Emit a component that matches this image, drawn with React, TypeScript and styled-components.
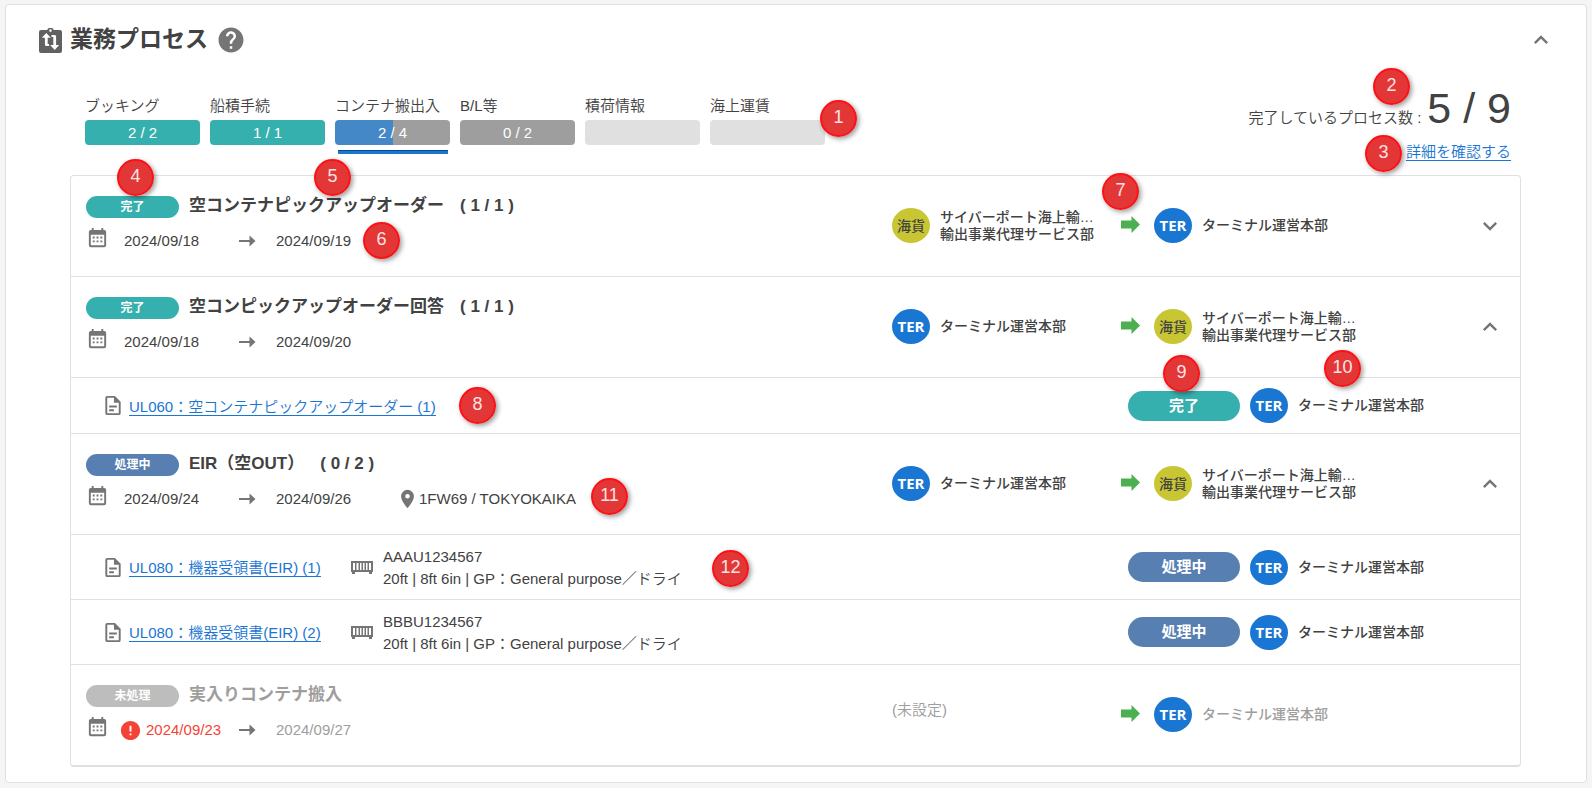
import React from 'react';
import styled, { createGlobalStyle } from 'styled-components';
import { MdError, MdHelp } from 'react-icons/md';

const GlobalStyle = createGlobalStyle`
  *, *::before, *::after { box-sizing: border-box; }
  body {
    margin: 0;
    padding: 4px 5px 5px;
    background: #f5f5f5;
    color: #424242;
    font-family: "Liberation Sans", "Noto Sans CJK JP", sans-serif;
    font-size: 15px;
    font-weight: 350;
    line-height: 22px;
  }
  h1, h2, p, ul, ol { margin: 0; padding: 0; }
  ul, ol { list-style: none; }
  svg { display: block; fill: currentColor; flex: none; }
`;

type Status = 'done' | 'active' | 'pending';
type PartyKind = 'TER' | '海貨';

const statusLabel: Record<Status, string> = { done: '完了', active: '処理中', pending: '未処理' };
const statusColor: Record<Status, string> = { done: '#36b0ae', active: '#587fb1', pending: '#bdbdbd' };

const Card = styled.main`
  padding-bottom: 15px;
  background: #fff;
  border: 1px solid #e0e0e0;
  border-radius: 4px;
`;

const Header = styled.header`
  display: flex;
  align-items: center;
  height: 70px;
  padding: 0 31px 0 33px;
  color: #616161;
`;

const Title = styled.h1`
  margin: 0 9px 2px 8px;
  color: #424242;
  font-size: 23px;
  line-height: 32px;
`;

const IconButton = styled.button`
  display: flex;
  align-items: center;
  justify-content: center;
  width: 28px;
  height: 28px;
  padding: 0;
  border: 0;
  background: none;
  color: #757575;
  cursor: pointer;
`;

const Spacer = styled.div`
  flex: 1;
`;

const Summary = styled.section`
  position: relative;
  display: flex;
  justify-content: space-between;
  height: 100px;
  padding: 0 75px 0 79px;
`;

const Stages = styled.ol`
  display: flex;
  gap: 10px;
  padding-top: 20px;
`;

const Stage = styled.li`
  position: relative;
  width: 115px;
  white-space: nowrap;
`;

const Bar = styled.div<{ $fill: string; $track: string; $percent: number }>`
  height: 25px;
  margin-top: 3px;
  border-radius: 4px;
  background: linear-gradient(to right, ${p => p.$fill} ${p => p.$percent}%, ${p => p.$track} ${p => p.$percent}%);
  color: #fff;
  line-height: 25px;
  text-align: center;
`;

const Underline = styled.div`
  height: 4px;
  margin: 5px 2px 0 3px;
  border-top: 1px solid #0d4a8a;
  background: #1976d2;
`;

const Total = styled.div`
  display: flex;
  flex-direction: column;
  align-items: flex-end;
  padding-top: 10px;
`;

const TotalLine = styled.p`
  display: flex;
  align-items: baseline;
  gap: 6px;
  line-height: 46px;
`;

const TotalCount = styled.strong`
  font-size: 43px;
  font-weight: 400;
`;

const Link = styled.a`
  padding-top: 3px;
  border-bottom: 1px solid #1976d2;
  color: #1976d2;
  line-height: 16px;
  text-decoration: none;
  white-space: nowrap;
`;

const Panel = styled.ul`
  margin: 0 65px 0 64px;
  border: 1px solid #e0e0e0;
  border-bottom-width: 2px;
  border-radius: 4px;
`;

const Row = styled.li<{ $kind: 'process' | 'document' | 'container' }>`
  position: relative;
  display: flex;
  align-items: center;
  height: ${p => ({ process: 101, document: 56, container: 65 })[p.$kind]}px;
  padding: 0 16px 0 ${p => (p.$kind === 'process' ? 15 : 32)}px;
  border-bottom: 1px solid #e0e0e0;

  &:last-child {
    height: 100px;
    border-bottom: 0;
  }
`;

const Main = styled.div`
  flex: 1;
  align-self: flex-start;
  min-width: 0;
  padding-top: 17px;
`;

const Heading = styled.div`
  display: flex;
  align-items: center;
  gap: 10px;
`;

const Name = styled.h2<{ $muted?: boolean }>`
  display: flex;
  gap: 16px;
  color: ${p => (p.$muted ? '#9e9e9e' : '#424242')};
  font-size: 17px;
  line-height: 26px;
`;

const Pill = styled.span<{ $status: Status; $large?: boolean }>`
  flex: none;
  width: ${p => (p.$large ? 112 : 93)}px;
  margin-top: ${p => (p.$large ? 0 : 2)}px;
  border-radius: 15px;
  background: ${p => statusColor[p.$status]};
  color: #fff;
  font-size: ${p => (p.$large ? 15 : 12)}px;
  font-weight: 700;
  line-height: ${p => (p.$large ? 30 : 22)}px;
  text-align: center;
`;

const Dates = styled.div`
  display: flex;
  align-items: center;
  height: 24px;
  margin-top: 10px;
  color: #757575;
  white-space: nowrap;
`;

const CalendarSlot = styled.span`
  padding-bottom: 6px;
`;

const StartDate = styled.span<{ $late?: boolean }>`
  display: flex;
  align-items: center;
  gap: 4px;
  width: ${p => (p.$late ? 120 : 115)}px;
  margin-left: ${p => (p.$late ? 10 : 15)}px;
  color: ${p => (p.$late ? '#f44336' : '#424242')};
`;

const EndDate = styled.span<{ $muted?: boolean }>`
  width: 103px;
  margin-left: 20px;
  color: ${p => (p.$muted ? '#9e9e9e' : '#424242')};
`;

const Place = styled.span`
  display: flex;
  align-items: center;
  margin-left: 17px;
`;

const PlaceName = styled.span`
  color: #424242;
`;

const Flow = styled.div`
  display: flex;
  align-items: center;
  flex: none;
  width: 612px;
  padding-bottom: 1px;
`;

const PartySlot = styled.div<{ $grow?: boolean }>`
  flex: ${p => (p.$grow ? '1' : '0 0 229px')};
`;

const ArrowSlot = styled.div`
  flex: 0 0 33px;
  padding-bottom: 3px;
  color: #4caf50;
`;

const PartyBox = styled.div<{ $muted?: boolean }>`
  display: flex;
  align-items: center;
  gap: 10px;
  color: ${p => (p.$muted ? '#9e9e9e' : '#424242')};
  font-size: 14px;
  font-weight: 500;
  line-height: 17px;
  white-space: nowrap;
`;

const Avatar = styled.span<{ $kind: PartyKind }>`
  flex: none;
  width: 38px;
  height: 35px;
  border-radius: 50%;
  background: ${p => (p.$kind === 'TER' ? '#1976d2' : '#c9c633')};
  color: ${p => (p.$kind === 'TER' ? '#fff' : '#424242')};
  font-family: "Open Sans", "Noto Sans CJK JP", sans-serif;
  font-size: ${p => (p.$kind === 'TER' ? 15 : 14)}px;
  font-weight: ${p => (p.$kind === 'TER' ? 700 : 500)};
  line-height: 35px;
  text-align: center;
`;

const Unset = styled.span`
  display: block;
  padding-bottom: 10px;
  color: #9e9e9e;
`;

const ChevronSlot = styled.div`
  width: 28px;
  height: 28px;
`;

const DocCell = styled.div`
  display: flex;
  align-items: center;
  gap: 6px;
  flex: 0 0 248px;
  color: #757575;
  white-space: nowrap;
`;

const Container = styled.div`
  display: flex;
  align-items: center;
  gap: 10px;
  color: #757575;
`;

const ContainerText = styled.p`
  padding-top: 2px;
  color: #424242;
  white-space: nowrap;
`;

const DocStatus = styled.div`
  display: flex;
  align-items: center;
  gap: 10px;
  flex: none;
  width: 376px;
`;

const Marker = styled.span<{ $x: number; $y: number; $fromRight?: boolean }>`
  position: absolute;
  z-index: 1;
  top: ${p => p.$y}px;
  ${p => (p.$fromRight ? 'right' : 'left')}: ${p => p.$x}px;
  width: 37px;
  height: 37px;
  border: 2px solid #fb1216;
  border-radius: 50%;
  background: rgba(226, 44, 44, 0.95);
  box-shadow: 2px 2px 5px rgba(0, 0, 0, 0.4);
  color: #fbe3e3;
  font-size: 18px;
  line-height: 30px;
  text-align: center;
`;

const Chevron = ({ up }: { up?: boolean }) => (
  <svg width="28" height="28" viewBox="0 0 24 24">
    <path d={up ? 'M7.41 15.41 12 10.83l4.59 4.58L18 14l-6-6-6 6z' : 'M7.41 8.59 12 13.17l4.59-4.58L18 10l-6 6-6-6z'} />
  </svg>
);

const TransferIcon = () => (
  <svg width="23" height="25" viewBox="0 0 23 25">
    <path
      fillRule="evenodd"
      d="M2 2h6.200a3.500 3.500 0 0 1 6.600 0H21a2 2 0 0 1 2 2v19a2 2 0 0 1-2 2H2a2 2 0 0 1-2-2V4a2 2 0 0 1 2-2zM11.500 1.300a1.300 1.300 0 1 0 0 2.600 1.300 1.300 0 0 0 0-2.600zM7.300 5 2.800 9.700h3.100v6.800q0 1.500 1.500 1.500h2.600v-2H8.700V9.700h3.100zM12.500 7v2h1.800v8h-3.100l4.500 5 4.500-5h-3.100V8.500q0-1.500-1.500-1.500z"
    />
  </svg>
);

const CalendarIcon = () => (
  <svg width="23" height="23" viewBox="0 0 24 24">
    <path d="M9 10v2H7v-2h2m4 0v2h-2v-2h2m4 0v2h-2v-2h2m2-7a2 2 0 0 1 2 2v14a2 2 0 0 1-2 2H5a2 2 0 0 1-2-2V5a2 2 0 0 1 2-2h1V1h2v2h8V1h2v2h1m0 16V8H5v11h14M9 14v2H7v-2h2m4 0v2h-2v-2h2m4 0v2h-2v-2h2z" />
  </svg>
);

const ThinArrow = () => (
  <svg width="17" height="12" viewBox="0 0 17 12">
    <path d="M0 5h10.500V.5L16.500 6l-6 5.500V7H0z" />
  </svg>
);

const BoldArrow = () => (
  <svg width="19" height="17" viewBox="0 0 19 17">
    <path d="M0 4.500h10.500V0L19 8.500 10.500 17v-4.500H0z" />
  </svg>
);

const PinIcon = () => (
  <svg width="23" height="22" viewBox="0 0 24 24">
    <path d="M12 11.500A2.500 2.500 0 1 1 12 6.500a2.500 2.500 0 0 1 0 5M12 2a7 7 0 0 0-7 7c0 5.250 7 13 7 13s7-7.750 7-13a7 7 0 0 0-7-7z" />
  </svg>
);

const DocIcon = () => (
  <svg width="20" height="23" viewBox="2 0 20 24">
    <path d="M6 2a2 2 0 0 0-2 2v16a2 2 0 0 0 2 2h12a2 2 0 0 0 2-2V8l-6-6H6m0 2h7v5h5v11H6V4m2 8v2h8v-2H8m0 4v2h5v-2H8z" />
  </svg>
);

const ContainerIcon = () => (
  <svg width="22" height="13" viewBox="0 0 22 13">
    <path
      fillRule="evenodd"
      d="M0 0h22v11h-1v2h-3v-2H4v2H1v-2H0zM2 2v7h2V2zM5.500 2v7h2V2zM9 2v7h1.500V2zM12 2v7h1.500V2zM15 2v7h1.500V2zM18 2v7h2V2z"
    />
  </svg>
);

const Party = ({ kind, lines, muted }: { kind: PartyKind; lines: string[]; muted?: boolean }) => (
  <PartyBox $muted={muted}>
    <Avatar $kind={kind}>{kind}</Avatar>
    <div>
      {lines.map(line => (
        <div key={line}>{line}</div>
      ))}
    </div>
  </PartyBox>
);

const Terminal = ({ muted }: { muted?: boolean }) => <Party kind="TER" lines={['ターミナル運営本部']} muted={muted} />;
const Forwarder = () => <Party kind="海貨" lines={['サイバーポート海上輸…', '輸出事業代理サービス部']} />;

type ProcessProps = {
  status: Status;
  name: string;
  count?: string;
  start: string;
  end: string;
  place?: string;
  late?: boolean;
  from: React.ReactNode;
  to: React.ReactNode;
  toggle?: 'open' | 'closed';
  children?: React.ReactNode;
};

const Process = ({ status, name, count, start, end, place, late, from, to, toggle, children }: ProcessProps) => (
  <Row $kind="process">
    <Main>
      <Heading>
        <Pill $status={status}>{statusLabel[status]}</Pill>
        <Name $muted={status === 'pending'}>
          {name}
          {count && <span>( {count} )</span>}
        </Name>
      </Heading>
      <Dates>
        <CalendarSlot>
          <CalendarIcon />
        </CalendarSlot>
        <StartDate $late={late}>
          {late && <MdError size={23} />}
          {start}
        </StartDate>
        <ThinArrow />
        <EndDate $muted={status === 'pending'}>{end}</EndDate>
        {place && (
          <Place>
            <PinIcon />
            <PlaceName>{place}</PlaceName>
          </Place>
        )}
      </Dates>
    </Main>
    <Flow>
      <PartySlot>{from}</PartySlot>
      <ArrowSlot>
        <BoldArrow />
      </ArrowSlot>
      <PartySlot $grow>{to}</PartySlot>
      <ChevronSlot>
        {toggle && (
          <IconButton type="button" aria-label="明細の表示切替" aria-expanded={toggle === 'open'}>
            <Chevron up={toggle === 'open'} />
          </IconButton>
        )}
      </ChevronSlot>
    </Flow>
    {children}
  </Row>
);

type DocumentProps = { status: Status; title: string; container?: string; children?: React.ReactNode };

const DocumentRow = ({ status, title, container, children }: DocumentProps) => (
  <Row $kind={container ? 'container' : 'document'}>
    <DocCell>
      <DocIcon />
      <Link href="#document">{title}</Link>
    </DocCell>
    {container && (
      <Container>
        <ContainerIcon />
        <ContainerText>
          {container}
          <br />
          20ft | 8ft 6in | GP：General purpose／ドライ
        </ContainerText>
      </Container>
    )}
    <Spacer />
    <DocStatus>
      <Pill $status={status} $large>
        {statusLabel[status]}
      </Pill>
      <Terminal />
    </DocStatus>
    {children}
  </Row>
);

const stages = [
  { name: 'ブッキング', count: '2 / 2', percent: 100, fill: '#36b0ae', track: '#9e9e9e' },
  { name: '船積手続', count: '1 / 1', percent: 100, fill: '#36b0ae', track: '#9e9e9e' },
  { name: 'コンテナ搬出入', count: '2 / 4', percent: 50, fill: '#4488c7', track: '#9e9e9e', current: true },
  { name: 'B/L等', count: '0 / 2', percent: 0, fill: '#9e9e9e', track: '#9e9e9e' },
  { name: '積荷情報', count: '', percent: 0, fill: '#e0e0e0', track: '#e0e0e0' },
  { name: '海上運賃', count: '', percent: 0, fill: '#e0e0e0', track: '#e0e0e0' },
];

export default function App() {
  return (
    <>
      <GlobalStyle />
      <Card>
        <Header>
          <TransferIcon />
          <Title>業務プロセス</Title>
          <IconButton type="button" aria-label="ヘルプ">
            <MdHelp size={30} />
          </IconButton>
          <Spacer />
          <IconButton type="button" aria-label="折りたたむ">
            <Chevron up />
          </IconButton>
        </Header>
        <Summary>
          <Stages>
            {stages.map((stage, i) => (
              <Stage key={stage.name}>
                {stage.name}
                <Bar $fill={stage.fill} $track={stage.track} $percent={stage.percent}>
                  {stage.count}
                </Bar>
                {stage.current && <Underline />}
                {i === stages.length - 1 && <Marker $x={110} $y={5}>1</Marker>}
              </Stage>
            ))}
          </Stages>
          <Total>
            <TotalLine>
              完了しているプロセス数 : <TotalCount>5 / 9</TotalCount>
            </TotalLine>
            <Link href="#details">詳細を確認する</Link>
          </Total>
          <Marker $x={176} $y={-7} $fromRight>2</Marker>
          <Marker $x={184} $y={60} $fromRight>3</Marker>
        </Summary>
        <Panel>
          <Process
            status="done"
            name="空コンテナピックアップオーダー"
            count="1 / 1"
            start="2024/09/18"
            end="2024/09/19"
            from={<Forwarder />}
            to={<Terminal />}
            toggle="closed"
          >
            <Marker $x={46} $y={-17}>4</Marker>
            <Marker $x={243} $y={-17}>5</Marker>
            <Marker $x={292} $y={46}>6</Marker>
            <Marker $x={381} $y={-3} $fromRight>7</Marker>
          </Process>
          <Process
            status="done"
            name="空コンピックアップオーダー回答"
            count="1 / 1"
            start="2024/09/18"
            end="2024/09/20"
            from={<Terminal />}
            to={<Forwarder />}
            toggle="open"
          />
          <DocumentRow status="done" title="UL060：空コンテナピックアップオーダー (1)">
            <Marker $x={388} $y={9}>8</Marker>
            <Marker $x={320} $y={-23} $fromRight>9</Marker>
            <Marker $x={159} $y={-28} $fromRight>10</Marker>
          </DocumentRow>
          <Process
            status="active"
            name="EIR（空OUT）"
            count="0 / 2"
            start="2024/09/24"
            end="2024/09/26"
            place="1FW69 / TOKYOKAIKA"
            from={<Terminal />}
            to={<Forwarder />}
            toggle="open"
          >
            <Marker $x={520} $y={44}>11</Marker>
          </Process>
          <DocumentRow status="active" title="UL080：機器受領書(EIR) (1)" container="AAAU1234567">
            <Marker $x={641} $y={15}>12</Marker>
          </DocumentRow>
          <DocumentRow status="active" title="UL080：機器受領書(EIR) (2)" container="BBBU1234567" />
          <Process
            status="pending"
            name="実入りコンテナ搬入"
            start="2024/09/23"
            end="2024/09/27"
            late
            from={<Unset>(未設定)</Unset>}
            to={<Terminal muted />}
          />
        </Panel>
      </Card>
    </>
  );
}
